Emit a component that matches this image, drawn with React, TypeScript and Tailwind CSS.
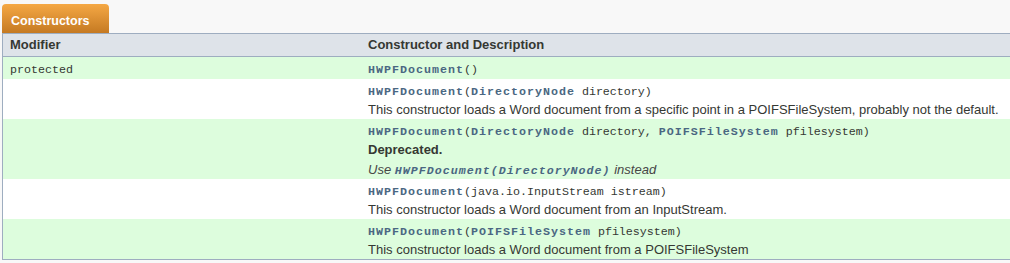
import React from 'react';

const mono = "font-['Liberation_Mono','DejaVu_Sans_Mono',monospace] text-[11.67px]";
const sans = "font-['Liberation_Sans',Arial,sans-serif]";

const Link: React.FC<{ children: React.ReactNode; italic?: boolean }> = ({ children, italic }) => (
  <span className={`${mono} font-bold tracking-[1px] text-[#4a6782] ${italic ? 'italic' : ''}`}>{children}</span>
);

const Code: React.FC<{ children: React.ReactNode }> = ({ children }) => (
  <span className={`${mono} text-[#353833]`}>{children}</span>
);

// one text line, fixed height so mixed fonts don't grow the row
const Line: React.FC<{ children: React.ReactNode; className?: string }> = ({ children, className = '' }) => (
  <div className={`h-[19px] leading-[19px] ${className}`}>{children}</div>
);

type Row = {
  modifier?: string;
  signature: React.ReactNode;
  body?: React.ReactNode;
};

const rows: Row[] = [
  {
    modifier: 'protected',
    signature: (
      <>
        <Link>HWPFDocument</Link>
        <Code>()</Code>
      </>
    ),
  },
  {
    signature: (
      <>
        <Link>HWPFDocument</Link>
        <Code>(</Code>
        <Link>DirectoryNode</Link>
        <Code> directory)</Code>
      </>
    ),
    body: <Line>This constructor loads a Word document from a specific point in a POIFSFileSystem, probably not the default.</Line>,
  },
  {
    signature: (
      <>
        <Link>HWPFDocument</Link>
        <Code>(</Code>
        <Link>DirectoryNode</Link>
        <Code> directory, </Code>
        <Link>POIFSFileSystem</Link>
        <Code> pfilesystem)</Code>
      </>
    ),
    body: (
      <>
        <Line className="font-bold">Deprecated.</Line>
        <Line className="italic text-[#474747] mt-[1px]">
          Use <Link italic>HWPFDocument(DirectoryNode)</Link> instead
        </Line>
      </>
    ),
  },
  {
    signature: (
      <>
        <Link>HWPFDocument</Link>
        <Code>(java.io.InputStream istream)</Code>
      </>
    ),
    body: <Line>This constructor loads a Word document from an InputStream.</Line>,
  },
  {
    signature: (
      <>
        <Link>HWPFDocument</Link>
        <Code>(</Code>
        <Link>POIFSFileSystem</Link>
        <Code> pfilesystem)</Code>
      </>
    ),
    body: <Line>This constructor loads a Word document from a POIFSFileSystem</Line>,
  },
];

export default function App() {
  return (
    <div className={`w-[1010px] h-[263px] overflow-hidden bg-[#f8f8f8] pl-[2px] pt-[4px] ${sans}`}>
      {/* tab */}
      <div className="flex">
        <div className="w-[107px] h-[29px] rounded-t-[4px] bg-gradient-to-b from-[#f5a844] to-[#c57a22] pl-[9px] pt-[9px] text-[12.5px] font-bold leading-[16px] text-white">
          Constructors
        </div>
      </div>

      {/* table */}
      <div className="border-l border-[#9eadc0] text-[13px] leading-[19px] text-[#353833]">
        <div className="grid grid-cols-[357px_1fr] h-[24px] border-y border-[#9eadc0] bg-[#dee3e9] font-bold leading-[22px]">
          <div className="pl-[7px]">Modifier</div>
          <div className="pl-[8px]">Constructor and Description</div>
        </div>
        {rows.map((r, i) => (
          <div
            key={i}
            className={`grid grid-cols-[357px_1fr] pt-[2px] ${i === 0 ? 'pb-[1px]' : ''} ${
              i % 2 === 0 ? 'bg-[#ddfddd]' : 'bg-white'
            }`}
          >
            <div className="pl-[7px]">{r.modifier && <Line><Code>{r.modifier}</Code></Line>}</div>
            <div className="pl-[8px] whitespace-nowrap">
              <Line>{r.signature}</Line>
              {r.body}
            </div>
          </div>
        ))}
        <div className="border-t border-[#9eadc0]" />
      </div>
    </div>
  );
}
